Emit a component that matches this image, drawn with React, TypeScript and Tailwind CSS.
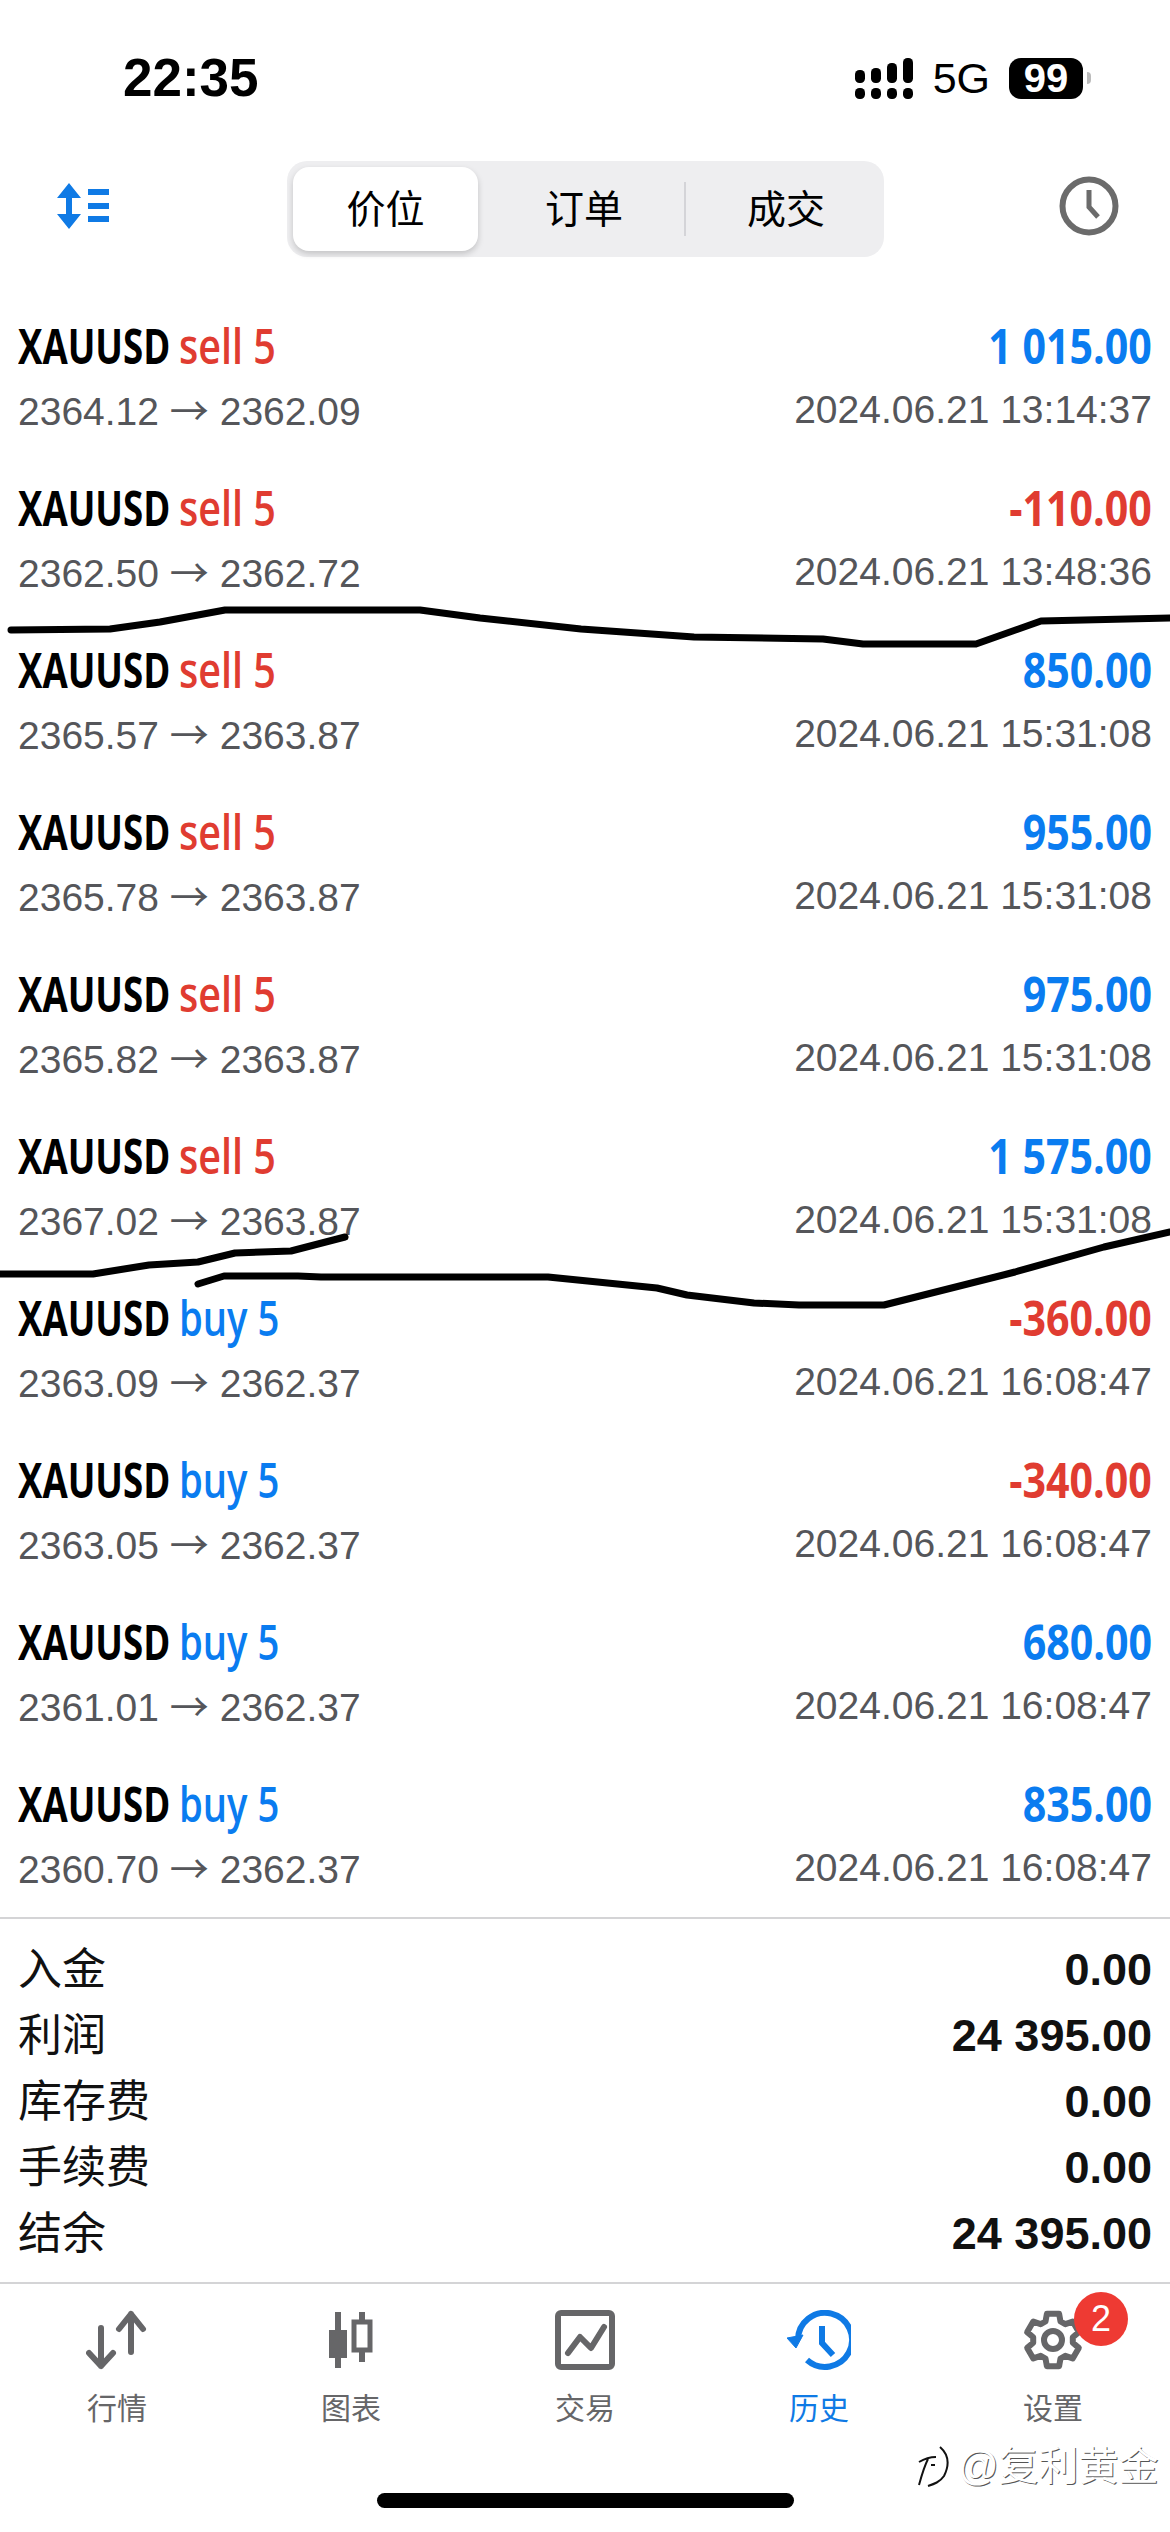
import React from 'react';

const openSans = "font-['Open_Sans',sans-serif]";

interface Deal {
  side: 'sell' | 'buy';
  from: string;
  to: string;
  time: string;
  profit: string;
}

const deals: Deal[] = [
  { side: 'sell', from: '2364.12', to: '2362.09', time: '2024.06.21 13:14:37', profit: '1 015.00' },
  { side: 'sell', from: '2362.50', to: '2362.72', time: '2024.06.21 13:48:36', profit: '-110.00' },
  { side: 'sell', from: '2365.57', to: '2363.87', time: '2024.06.21 15:31:08', profit: '850.00' },
  { side: 'sell', from: '2365.78', to: '2363.87', time: '2024.06.21 15:31:08', profit: '955.00' },
  { side: 'sell', from: '2365.82', to: '2363.87', time: '2024.06.21 15:31:08', profit: '975.00' },
  { side: 'sell', from: '2367.02', to: '2363.87', time: '2024.06.21 15:31:08', profit: '1 575.00' },
  { side: 'buy', from: '2363.09', to: '2362.37', time: '2024.06.21 16:08:47', profit: '-360.00' },
  { side: 'buy', from: '2363.05', to: '2362.37', time: '2024.06.21 16:08:47', profit: '-340.00' },
  { side: 'buy', from: '2361.01', to: '2362.37', time: '2024.06.21 16:08:47', profit: '680.00' },
  { side: 'buy', from: '2360.70', to: '2362.37', time: '2024.06.21 16:08:47', profit: '835.00' },
];

const summary = [
  ['入金', '0.00'],
  ['利润', '24 395.00'],
  ['库存费', '0.00'],
  ['手续费', '0.00'],
  ['结余', '24 395.00'],
];

const DealRow = ({ deal }: { deal: Deal }) => {
  const sideStyle = deal.side === 'sell' ? 'text-[#e03c31] scale-x-[.807]' : 'text-[#0a7cf0] scale-x-[.78]';
  const profitColor = deal.profit.startsWith('-') ? 'text-[#e03c31]' : 'text-[#0a7cf0]';
  return (
    <div className="h-[162px] pt-[18px] pl-[18px] pr-[18px]">
      <div className={`flex justify-between h-[60px] items-center text-[49px] leading-[60px] ${openSans}`}>
        <div className="flex items-center">
          <span className="inline-block w-[148px] origin-left scale-x-[.747] whitespace-nowrap font-bold text-black">XAUUSD</span>
          <span className={`inline-block ml-[13px] w-[96px] origin-left whitespace-nowrap font-semibold ${sideStyle}`}>
            {deal.side} 5
          </span>
        </div>
        <span className={`inline-block origin-right scale-x-[.84] whitespace-nowrap font-bold ${profitColor}`}>{deal.profit}</span>
      </div>
      <div className="flex justify-between mt-[10px] h-[50px] items-center text-[39px] leading-[50px] text-[#55565a] font-['Liberation_Sans',sans-serif]">
        <span>
          {deal.from} <span className="font-['Noto_Sans_CJK_SC',sans-serif]">→</span> {deal.to}
        </span>
        <span>{deal.time}</span>
      </div>
    </div>
  );
};

const TabItem = ({
  label,
  active,
  children,
}: {
  label: string;
  active?: boolean;
  children: React.ReactNode;
}) => (
  <div className={`flex flex-col items-center ${active ? 'text-[#0f7ae5]' : 'text-[#666668]'}`}>
    <div className="h-[60px] w-[100px] flex items-center justify-center">{children}</div>
    <span className="mt-[21px] text-[30px] leading-[36px]">{label}</span>
  </div>
);

export default function App() {
  return (
    <div className="relative w-[1170px] h-[2532px] bg-white overflow-hidden font-['Liberation_Sans','Noto_Sans_CJK_SC',sans-serif]">
      {/* status bar */}
      <div className="h-[130px] flex items-center justify-between pl-[123px] pr-[79px] pt-[26px]">
        <span className="text-[53px] leading-[60px] font-bold text-black font-['Liberation_Sans',sans-serif]">22:35</span>
        <div className="flex items-center">
          <svg width="58" height="41" viewBox="0 0 58 41" fill="#000">
            <rect x="0" y="12" width="10" height="13" rx="4.5" />
            <rect x="0" y="30" width="10" height="11" rx="4.5" />
            <rect x="16" y="10" width="10" height="15" rx="4.5" />
            <rect x="16" y="30" width="10" height="11" rx="4.5" />
            <rect x="32" y="5" width="10" height="20" rx="4.5" />
            <rect x="32" y="30" width="10" height="11" rx="4.5" />
            <rect x="48" y="0" width="10" height="25" rx="4.5" />
            <rect x="48" y="30" width="10" height="11" rx="4.5" />
          </svg>
          <span className="ml-[20px] text-[43px] leading-[50px] text-black">5G</span>
          <div className="ml-[19px] w-[74px] h-[41px] rounded-[12px] bg-black flex items-center justify-center text-white font-bold text-[40px] leading-[41px]">
            99
          </div>
          <div className="ml-[4px] w-[4px] h-[12px] rounded-r-full bg-[#bbbbbb]" />
        </div>
      </div>

      {/* toolbar */}
      <div className="h-[167px] flex items-start pl-[57px] pr-[51px] pt-[31px]">
        <svg className="mt-[22px]" width="52" height="46" viewBox="0 0 52 46" fill="#0f7ae5">
          <path d="M12 0L24 15H15V31H24L12 46L0 31H9V15H0Z" />
          <rect x="31" y="6" width="21" height="6" />
          <rect x="31" y="20" width="21" height="6" />
          <rect x="31" y="33" width="21" height="6" />
        </svg>
        <div className="ml-[178px] w-[597px] h-[96px] rounded-[20px] bg-[#eeeef0] p-[6px] flex items-center text-[39px] text-black">
          <div className="w-[185px] h-[84px] pt-[2px] rounded-[16px] bg-white shadow-[0_3px_6px_rgba(0,0,0,0.18)] flex items-center justify-center">
            价位
          </div>
          <div className="w-[208px] h-[54px] pl-[6px] pt-[2px] flex items-center justify-center border-r-2 border-[#d4d4d8]">订单</div>
          <div className="flex-1 pl-[8px] pt-[2px] flex items-center justify-center">成交</div>
        </div>
        <svg className="mt-[15px] ml-auto" width="60" height="60" viewBox="0 0 60 60" fill="none" stroke="#6b6b6b">
          <circle cx="30" cy="30" r="26.5" strokeWidth="6" />
          <path d="M30 14V31L39 41" strokeWidth="5" />
        </svg>
      </div>

      {/* deals */}
      <div>
        {deals.map((deal, i) => (
          <DealRow key={i} deal={deal} />
        ))}
      </div>

      {/* summary */}
      <div className="border-t-2 border-[#d4d4d6] h-[365px] pt-[18px] pl-[18px] pr-[18px]">
        {summary.map(([label, value]) => (
          <div key={label} className="h-[66px] flex items-center justify-between text-[44px] leading-[66px] text-[#111111]">
            <span>{label}</span>
            <span className="text-[45px] font-bold font-['Liberation_Sans',sans-serif]">{value}</span>
          </div>
        ))}
      </div>

      {/* tab bar */}
      <div className="border-t-2 border-[#d4d4d6] h-[250px] pt-[26px] grid grid-cols-5 items-start">
        <TabItem label="行情">
          <svg width="62" height="60" viewBox="0 0 62 60" fill="none" stroke="currentColor" strokeWidth="6" strokeLinecap="round" strokeLinejoin="round">
            <path d="M15 18V56M3 43L15 56L27 43" />
            <path d="M45 42V4M33 19L45 4L57 19" />
          </svg>
        </TabItem>
        <TabItem label="图表">
          <svg width="44" height="56" viewBox="0 0 44 56" fill="currentColor">
            <rect x="6" y="0" width="6" height="56" />
            <rect x="0" y="18" width="18" height="28" />
            <rect x="30" y="0" width="6" height="50" />
            <rect x="25" y="10" width="16" height="28" fill="white" stroke="currentColor" strokeWidth="5" />
          </svg>
        </TabItem>
        <TabItem label="交易">
          <svg width="60" height="60" viewBox="0 0 60 60" fill="none" stroke="currentColor" strokeWidth="6" strokeLinecap="round" strokeLinejoin="round">
            <rect x="3" y="3" width="54" height="54" rx="3" />
            <path d="M13 43L25 27L36 38L49 17" />
          </svg>
        </TabItem>
        <TabItem label="历史" active>
          <svg width="64" height="60" viewBox="0 0 64 60" fill="none" stroke="currentColor" strokeWidth="6">
            <path d="M11 30A27 27 0 1 1 20 50" />
            <path d="M0 28L16 25L9 38Z" fill="currentColor" strokeWidth="1" />
            <path d="M35 16V33L46 45" />
          </svg>
        </TabItem>
        <TabItem label="设置">
          <svg width="60" height="60" viewBox="0 0 60 60" fill="none" stroke="currentColor" strokeWidth="6" strokeLinejoin="round">
            <path d="M23.9 3.7L36.1 3.7L37.5 11.5L42.3 14.2L49.7 11.6L55.8 22.1L49.8 27.2L49.8 32.8L55.8 37.9L49.7 48.4L42.3 45.8L37.5 48.5L36.1 56.3L23.9 56.3L22.5 48.5L17.7 45.8L10.3 48.4L4.2 37.9L10.2 32.8L10.2 27.2L4.2 22.1L10.3 11.6L17.7 14.2L22.5 11.5Z" />
            <circle cx="30" cy="30" r="9" />
          </svg>
        </TabItem>
      </div>

      {/* badge */}
      <div className="absolute left-[1074px] top-[2292px] w-[54px] h-[54px] rounded-full bg-[#ee3a33] flex items-center justify-center text-white text-[36px]">
        2
      </div>

      {/* watermark */}
      <div className="absolute left-[916px] top-[2442px] flex items-center text-[40px] leading-[48px] text-white [text-shadow:1px_1px_0_#555]">
        <svg width="34" height="48" viewBox="0 0 34 48" fill="none" stroke="#111" strokeWidth="2">
          <path d="M3 20C8 17 12 15 20 15M12 17C8 25 6 32 3 43" />
          <path d="M24 5C32 12 34 22 28 34C24 40 18 42 12 44" />
          <path d="M15 23L19 23" />
        </svg>
        <span className="ml-[8px]">@复利黄金</span>
      </div>

      {/* home indicator */}
      <div className="absolute left-[377px] top-[2493px] w-[417px] h-[15px] rounded-full bg-black" />

      {/* marker strokes drawn over the list */}
      <svg className="absolute left-0 top-0 pointer-events-none" width="1170" height="2532" fill="none" stroke="#000" strokeWidth="7" strokeLinecap="round" strokeLinejoin="round">
        <path d="M11 630L110 629L160 622L225 610L420 610L480 618L581 629L694 637L823 639L863 644L976 644L1041 621L1170 618" />
        <path d="M0 1274L93 1274L149 1265L198 1262L235 1253L291 1251L345 1237" />
        <path d="M198 1284L224 1276L298 1276L321 1277L548 1277L657 1288L687 1295L754 1303L799 1305L884 1305L1015 1272L1104 1247L1170 1232" />
      </svg>
    </div>
  );
}
